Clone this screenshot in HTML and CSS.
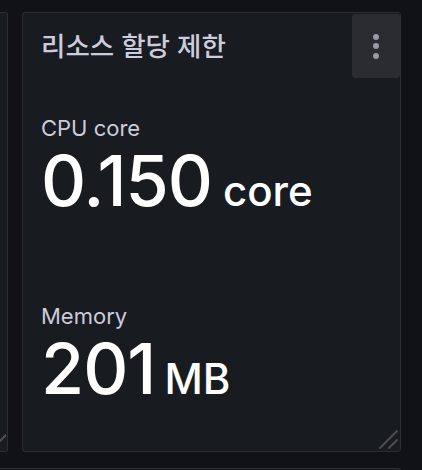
FILE: index.html
```html
<!DOCTYPE html>
<html lang="ko">
<head>
<meta charset="utf-8">
<link rel="stylesheet" href="styles.css">
</head>
<body>
<div class="canvas">
  <div class="row">
    <div class="panel panel-left">
      <span class="resize resize-left"></span>
    </div>
    <div class="panel panel-main">
      <div class="header">
        <h2 class="title">리소스 할당 제한</h2>
        <button class="menu" aria-label="menu">
          <span class="dot"></span><span class="dot"></span><span class="dot"></span>
        </button>
      </div>
      <div class="body">
        <div class="stat">
          <div class="label">CPU core</div>
          <div class="value">0.150<span class="unit unit-core">core</span></div>
        </div>
        <div class="stat stat-mem">
          <div class="label">Memory</div>
          <div class="value">201<span class="unit unit-mb">MB</span></div>
        </div>
      </div>
      <svg class="handle" width="20" height="20" viewBox="0 0 20 20">
        <line x1="1" y1="18" x2="18" y2="1" />
        <line x1="10" y1="18" x2="18" y2="10" />
      </svg>
    </div>
  </div>
  <div class="panel panel-next"></div>
</div>
</body>
</html>
```
FILE: styles.css
```css
html, body {
  margin: 0;
  padding: 0;
  background: #111217;
  overflow: hidden;
}
body {
  width: 422px;
  height: 470px;
  font-family: Inter, "Noto Sans CJK KR", sans-serif;
  color: #ccccdc;
}
.canvas {
  height: 470px;
  box-sizing: border-box;
  padding-top: 12px;
  display: flex;
  flex-direction: column;
  gap: 16px;
  overflow: hidden;
}
.row {
  display: flex;
  gap: 14px;
  height: 440px;
  flex: none;
}
.panel {
  background: #181b1f;
  border: 1px solid #2c2e33;
  border-radius: 3px;
  box-sizing: border-box;
  position: relative;
}
.panel-left {
  width: 8px;
  border-left: none;
  border-top-left-radius: 0;
  border-bottom-left-radius: 0;
}
.panel-main {
  width: 379px;
  display: flex;
  flex-direction: column;
}
.panel-next {
  width: 401px;
  height: 20px;
  flex: none;
  border-left: none;
  border-radius: 0 3px 0 0;
}
.header {
  height: 64px;
  display: flex;
  align-items: center;
  justify-content: space-between;
  padding-left: 18px;
}
.title {
  margin: 0;
  font-family: Inter, "Noto Sans CJK KR", sans-serif;
  font-size: 26.5px;
  font-weight: 500;
  color: #ccccdc;
  line-height: 32px;
  padding-top: 1px;
}
.menu {
  align-self: flex-start;
  width: 48px;
  height: 64px;
  margin-top: 1px;
  background: #2a2c31;
  border: none;
  border-radius: 4px;
  padding: 0;
  display: flex;
  flex-direction: column;
  align-items: center;
  justify-content: center;
  gap: 3.5px;
}
.dot {
  width: 6px;
  height: 6px;
  border-radius: 50%;
  background: #9a9aa6;
}
.body {
  padding: 38px 18px 0 18px;
  display: flex;
  flex-direction: column;
}
.stat-mem {
  margin-top: 72px;
}
.label {
  font-size: 22px;
  line-height: 26px;
  color: #ccccdc;
}
.value {
  font-size: 70px;
  line-height: 80px;
  font-weight: 500;
  color: #ffffff;
  letter-spacing: -1px;
  white-space: nowrap;
}
.unit {
  letter-spacing: 0;
}
.unit-core {
  font-size: 42px;
  margin-left: 11px;
}
.unit-mb {
  font-size: 42px;
  margin-left: 9px;
}
.handle {
  position: absolute;
  right: 1px;
  bottom: 1px;
}
.handle line {
  stroke: #4b4d53;
  stroke-width: 2;
  stroke-linecap: round;
}
.resize-left {
  position: absolute;
  right: 1px;
  bottom: 6px;
  width: 6px;
  height: 14px;
  background: linear-gradient(135deg, transparent 45%, #4b4d53 45%, #4b4d53 60%, transparent 60%);
}
```
